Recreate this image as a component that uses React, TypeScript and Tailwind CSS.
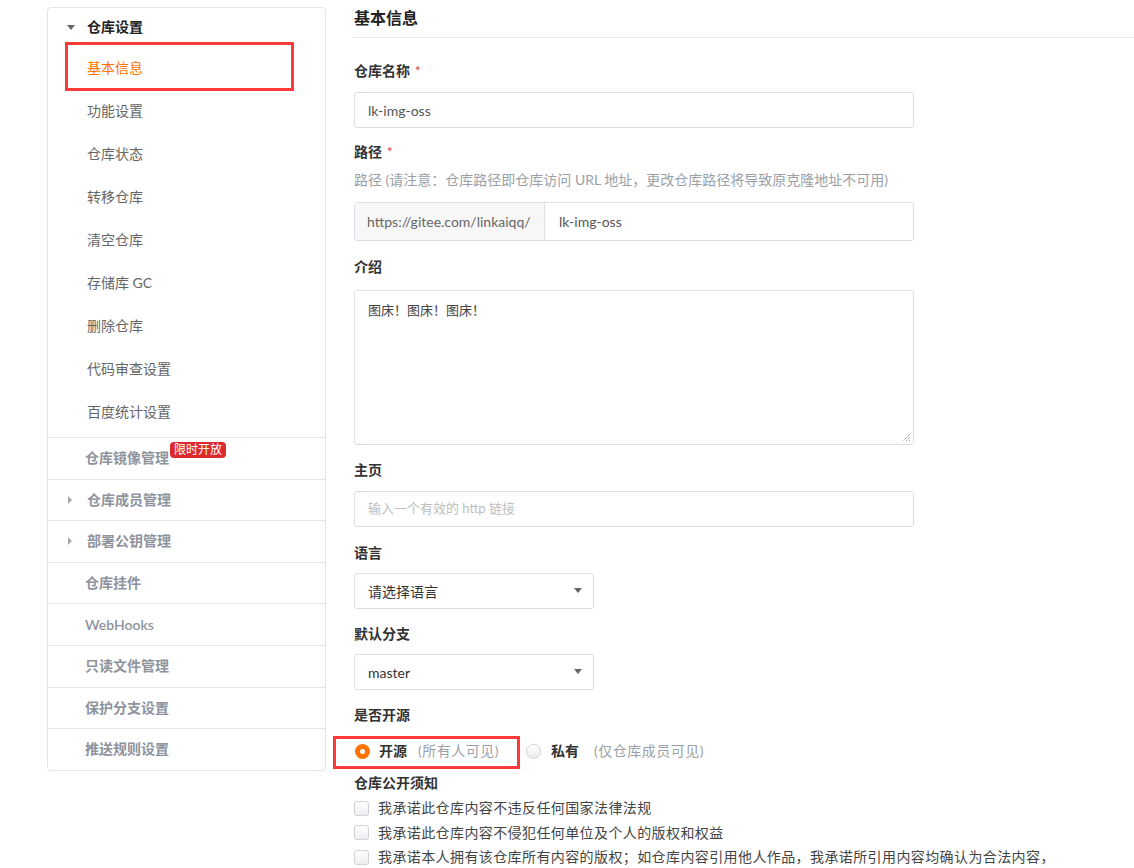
import React from "react";

const subItems = [
  "基本信息",
  "功能设置",
  "仓库状态",
  "转移仓库",
  "清空仓库",
  "存储库 GC",
  "删除仓库",
  "代码审查设置",
  "百度统计设置",
];

const sections: { label: string; caret?: boolean; badge?: string }[] = [
  { label: "仓库镜像管理", badge: "限时开放" },
  { label: "仓库成员管理", caret: true },
  { label: "部署公钥管理", caret: true },
  { label: "仓库挂件" },
  { label: "WebHooks" },
  { label: "只读文件管理" },
  { label: "保护分支设置" },
  { label: "推送规则设置" },
];

const notices = [
  "我承诺此仓库内容不违反任何国家法律法规",
  "我承诺此仓库内容不侵犯任何单位及个人的版权和权益",
  "我承诺本人拥有该仓库所有内容的版权；如仓库内容引用他人作品，我承诺所引用内容均确认为合法内容，",
];

const font = "font-['Lato','Noto_Sans_CJK_SC',sans-serif]";

function CaretDown({ className = "" }: { className?: string }) {
  return (
    <svg width="8" height="5" viewBox="0 0 8 5" className={className}>
      <path d="M0 0 L8 0 L4 5 Z" fill="#666" />
    </svg>
  );
}

function Sidebar() {
  return (
    <div className="relative w-[279px] shrink-0 rounded-[4px] border border-[#e3e5e9] bg-white">
      {/* 标注框 */}
      <div className="pointer-events-none absolute left-[17px] top-[34px] h-[49px] w-[229px] border-[3px] border-[#fb3a3a]" />
      <div className="flex h-[38px] items-center pl-[19px]">
        <CaretDown />
        <span className="ml-[12px] text-[14px] font-semibold leading-[20px] text-[#222]">仓库设置</span>
      </div>
      <div className="pb-[4px]">
        {subItems.map((item, i) => (
          <div
            key={item}
            className={`flex h-[43px] items-center pl-[39px] text-[14px] leading-[20px] ${
              i === 0 ? "text-[#fe7300]" : "text-[#666]"
            }`}
          >
            {item}
          </div>
        ))}
      </div>
      {sections.map((s) => (
        <div
          key={s.label}
          className="flex h-[41.6px] items-center border-t border-[#e3e5e9] pl-[20px] text-[14px] font-semibold leading-[20px] text-[#8e939c]"
        >
          <span className="flex w-[17px] items-center">
            {s.caret && (
              <svg width="4" height="8" viewBox="0 0 4 8">
                <path d="M0 0 L4 4 L0 8 Z" fill="#aaa" />
              </svg>
            )}
          </span>
          <span className={s.caret ? "ml-[2px]" : ""}>{s.label}</span>
          {s.badge && (
            <span className="relative -top-[8px] ml-[1px] rounded-[4px] bg-[#dd2a2f] px-[4px] text-[12px] font-normal leading-[16px] text-white">
              {s.badge}
            </span>
          )}
        </div>
      ))}
    </div>
  );
}

function Label({ text, required, className = "" }: { text: string; required?: boolean; className?: string }) {
  return (
    <div className={`h-[20px] text-[14px] font-semibold leading-[20px] text-[#333] ${className}`}>
      {text}
      {required && <span className="ml-[5px] align-top text-[13px] text-[#e74c3c]">*</span>}
    </div>
  );
}

function Select({ value, className = "" }: { value: string; className?: string }) {
  return (
    <div
      className={`flex h-[36px] w-[240px] items-center justify-between rounded-[3px] border border-[#dcdfe5] pl-[13px] pr-[11px] text-[14px] text-[#333] ${className}`}
    >
      <span>{value}</span>
      <CaretDown className="-mt-[2px]" />
    </div>
  );
}

export default function App() {
  return (
    <div className={`flex min-h-[868px] overflow-hidden bg-white pl-[47px] pt-[7px] ${font}`}>
      <div>
        <Sidebar />
      </div>
      <div className="-mt-[7px] ml-[26px] flex-1">
        <div className="h-[38px] border-b border-[#e5e7eb] pl-[2px] pt-[6px]">
          <div className="text-[16px] font-semibold leading-[24px] text-[#222]">基本信息</div>
        </div>
        <div className="pl-[2px]">
          <Label text="仓库名称" required className="mt-[23px]" />
          <div className="mt-[11px] flex h-[36px] w-[560px] items-center rounded-[3px] border border-[#dcdfe5] pl-[13px] text-[14px] text-[#555]">
            lk-img-oss
          </div>

          <Label text="路径" required className="mt-[14px]" />
          <div className="mt-[8px] h-[20px] text-[14px] leading-[20px] text-[#9a9fa8]">
            路径 (请注意：仓库路径即仓库访问 URL 地址，更改仓库路径将导致原克隆地址不可用)
          </div>
          <div className="mt-[12px] flex h-[39px] w-[560px] rounded-[3px] border border-[#dcdfe5] text-[14px]">
            <div className="flex w-[190px] items-center border-r border-[#dcdfe5] bg-[#f7f7f7] pl-[12px] text-[#666]">
              https://gitee.com/linkaiqq/
            </div>
            <div className="flex flex-1 items-center pl-[14px] text-[#555]">lk-img-oss</div>
          </div>

          <Label text="介绍" className="mt-[16px]" />
          <div className="relative mt-[13px] h-[155px] w-[560px] rounded-[3px] border border-[#dcdfe5] px-[13px] pt-[9px] text-[13px] leading-[20px] text-[#444]">
            图床！图床！图床！
            <svg width="10" height="10" viewBox="0 0 10 10" className="absolute bottom-[2px] right-[2px]">
              <path d="M9 2 L2 9 M9 5 L5 9 M9 8 L8 9" stroke="#777" strokeWidth="1" strokeDasharray="1 1" />
            </svg>
          </div>

          <Label text="主页" className="mt-[15px]" />
          <div className="mt-[11px] flex h-[36px] w-[560px] items-center rounded-[3px] border border-[#dcdfe5] pl-[13px] text-[13px] text-[#bdbdbd]">
            输入一个有效的 http 链接
          </div>

          <Label text="语言" className="mt-[16px]" />
          <Select value="请选择语言" className="mt-[10px]" />

          <Label text="默认分支" className="mt-[15px]" />
          <Select value="master" className="mt-[10px]" />

          <Label text="是否开源" className="mt-[15px]" />
          <div className="relative mt-[16px] flex h-[20px] items-center text-[14px] leading-[20px]">
            <div className="pointer-events-none absolute -left-[21px] -top-[5px] h-[33px] w-[187px] border-[3px] border-[#fb3a3a]" />
            <span className="ml-[1px] flex h-[15px] w-[15px] items-center justify-center rounded-full bg-[#fe7300]">
              <span className="h-[5px] w-[5px] rounded-full bg-white" />
            </span>
            <span className="ml-[9px] font-semibold text-[#333]">开源</span>
            <span className="ml-[11px] tracking-[0.5px] text-[#9a9fa8]">(所有人可见)</span>
            <span className="ml-[27px] h-[15px] w-[15px] rounded-full border border-[#cfd2d6] bg-gradient-to-b from-white to-[#ececec]" />
            <span className="ml-[10px] font-semibold text-[#333]">私有</span>
            <span className="ml-[15px] tracking-[0.5px] text-[#9a9fa8]">(仅仓库成员可见)</span>
          </div>

          <Label text="仓库公开须知" className="mt-[12px]" />
          <div className="mt-[5px] flex flex-col gap-[4.5px]">
            {notices.map((n) => (
              <div key={n} className="flex h-[20px] items-center text-[14px] leading-[20px] tracking-[0.4px] text-[#444]">
                <span className="h-[15px] w-[15px] shrink-0 rounded-[3px] border border-[#cfd2d6] bg-gradient-to-b from-white to-[#eeeeee]" />
                <span className="ml-[9px] whitespace-nowrap">{n}</span>
              </div>
            ))}
          </div>
        </div>
      </div>
    </div>
  );
}
